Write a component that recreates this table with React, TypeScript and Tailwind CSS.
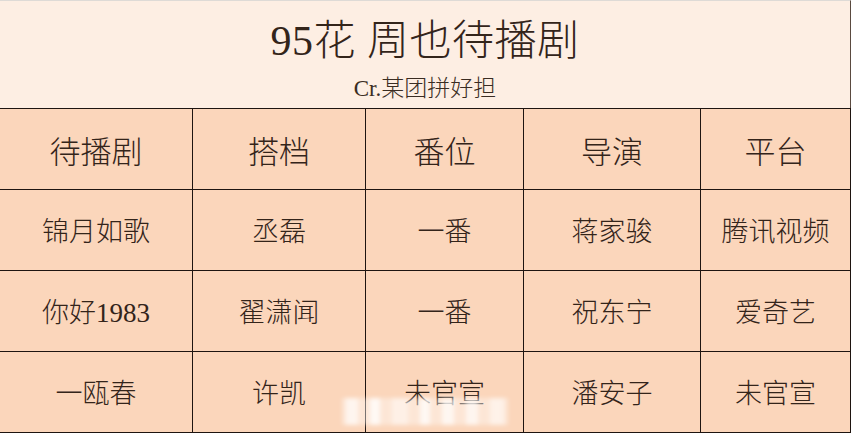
const rows = [
  ['锦月如歌', '丞磊', '一番', '蒋家骏', '腾讯视频'],
  ['你好1983', '翟潇闻', '一番', '祝东宁', '爱奇艺'],
  ['一瓯春', '许凯', '未官宣', '潘安子', '未官宣'],
];

const headers = ['待播剧', '搭档', '番位', '导演', '平台'];

const colWidths = ['w-[193px]', 'w-[173px]', 'w-[158px]', 'w-[177px]', 'w-[150px]'];

const fontStack = {
  fontFamily:
    '"Liberation Serif", "Noto Sans CJK SC Light", "Noto Sans CJK SC DemiLight", "Noto Sans CJK SC", serif',
};

function Row({ cells, head }: { cells: string[]; head?: boolean }) {
  return (
    <div className="flex h-[81px] border-t border-[#1e1410]">
      {cells.map((c, i) => (
        <div
          key={i}
          className={`${colWidths[i]} flex items-center justify-center border-r border-[#1e1410] bg-[#fbd6bb] ${
            head ? 'text-[31px] pt-[8px]' : 'text-[27px] pt-[5px]'
          }`}
        >
          {c}
        </div>
      ))}
    </div>
  );
}

// blurred weibo-style watermark sitting over the bottom row
function Watermark() {
  const bars = ['w-[12px] bg-white/60', 'w-[10px] bg-white/75', 'w-[16px] bg-white/40', 'w-[10px] bg-white/70', 'w-[12px] bg-white/65', 'w-[12px] bg-white/60', 'w-[14px] bg-white/45'];
  return (
    <div className="absolute left-[342px] top-[398px] w-[166px] h-[27px] flex items-stretch justify-between px-[4px] bg-white/40 blur-[2px]">
      {bars.map((b, i) => (
        <div key={i} className={b} />
      ))}
    </div>
  );
}

export default function App() {
  return (
    <div
      className="relative w-[851px] h-[433px] overflow-hidden bg-[#fdeee3] font-light text-[#33241a]"
      style={fontStack}
    >
      {/* title */}
      <div className="h-[108px] flex flex-col items-center border-t border-[#dedad6] border-r border-r-[#5a4a40]">
        <div className="text-[42px] leading-none mt-[19px] tracking-[0.5px]">95花 周也待播剧</div>
        <div className="text-[23px] leading-none mt-[15px] text-[#3a2c22]">Cr.某团拼好担</div>
      </div>

      <Row cells={headers} head />
      {rows.map((r, i) => (
        <Row key={i} cells={r} />
      ))}
      <div className="border-t border-[#1e1410]" />

      <Watermark />
    </div>
  );
}
